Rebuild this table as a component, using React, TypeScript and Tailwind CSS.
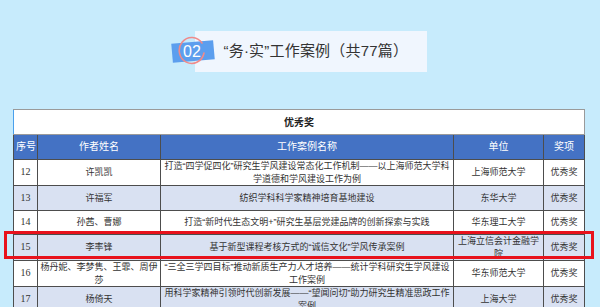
import React from "react";

type Row = {
  no: string;
  author: string;
  title: string;
  unit: string;
  award: string;
  shaded: boolean;
};

const rows: Row[] = [
  {
    no: "12",
    author: "许凯凯",
    title: "打造“四学促四化”研究生学风建设常态化工作机制——以上海师范大学科学道德和学风建设工作为例",
    unit: "上海师范大学",
    award: "优秀奖",
    shaded: false,
  },
  { no: "13", author: "许福军", title: "纺织学科科学家精神培育基地建设", unit: "东华大学", award: "优秀奖", shaded: true },
  {
    no: "14",
    author: "孙茜、曹娜",
    title: "打造“新时代生态文明+”研究生基层党建品牌的创新探索与实践",
    unit: "华东理工大学",
    award: "优秀奖",
    shaded: false,
  },
  {
    no: "15",
    author: "李率锋",
    title: "基于新型课程考核方式的“诚信文化”学风传承案例",
    unit: "上海立信会计金融学院",
    award: "优秀奖",
    shaded: true,
  },
  {
    no: "16",
    author: "杨丹妮、李梦隽、王霏、周伊莎",
    title: "“三全三学四目标”推动新质生产力人才培养——统计学科研究生学风建设工作案例",
    unit: "华东师范大学",
    award: "优秀奖",
    shaded: false,
  },
  {
    no: "17",
    author: "杨倚天",
    title: "用科学家精神引领时代创新发展——“望闻问切”助力研究生精准思政工作案例",
    unit: "上海大学",
    award: "优秀奖",
    shaded: true,
  },
];

const cell = "border border-[#4d4d4d] px-[2px] text-center align-middle leading-[12.5px]";

const App: React.FC = () => {
  return (
    <div
      className="w-[600px] h-[307px] overflow-hidden bg-[#c7ebfc] flex flex-col items-center"
      style={{ fontFamily: '"Liberation Sans", "Noto Sans CJK SC", sans-serif' }}
    >
      {/* 标题 */}
      <div className="mt-[31px] flex items-center pr-[2px]">
        <div className="relative z-10 w-[44px] h-[41px] flex items-center justify-center">
          <div className="absolute left-0 top-[11px] w-[42px] h-[19px] bg-[#5c9eee] -rotate-[5deg]" />
          <svg className="absolute left-[6px] top-[5px]" width="28" height="29" viewBox="0 0 28 29">
            <path
              d="M24 7 A12.5 13 0 1 0 26 17"
              fill="none"
              stroke="#f08a8a"
              strokeWidth="1.6"
              strokeLinecap="round"
            />
          </svg>
          <span className="relative text-white text-[16px] leading-none mr-[3px]">02</span>
        </div>
        <div className="-ml-[21px] w-[232px] h-[41px] bg-[#f0f6fe] flex items-center pl-[29px]">
          <span className="text-[15px] text-[#333] tracking-[0.2px]">“务·实”工作案例（共77篇）</span>
        </div>
      </div>

      {/* 表格 */}
      <div className="relative mt-[37px] w-[600px] pl-[13px]">
        <table className="table-fixed border-collapse w-[571px] text-[9px] text-[#333] bg-white border-l border-l-[#4aa0ec]">
          <colgroup>
            <col className="w-[24px]" />
            <col className="w-[123px]" />
            <col className="w-[293px]" />
            <col className="w-[90px]" />
            <col className="w-[41px]" />
          </colgroup>
          <tbody>
            <tr className="h-[25px]">
              <td colSpan={5} className="border border-[#9a9a9a] border-l-[#4aa0ec] text-center font-bold text-[10px] text-[#222]">
                优秀奖
              </td>
            </tr>
            <tr className="h-[25px] bg-[#4472c4] text-white text-[10px]">
              <td className={`${cell} px-0 whitespace-nowrap`}>序号</td>
              <td className={cell}>作者姓名</td>
              <td className={cell}>工作案例名称</td>
              <td className={cell}>单位</td>
              <td className={cell}>奖项</td>
            </tr>
            {rows.map((r) => (
              <tr key={r.no} className={`h-[24.5px] ${r.shaded ? "bg-[#d9e1f2]" : "bg-white"}`}>
                <td className={`${cell} px-0 text-[10px]`} style={{ fontFamily: '"Liberation Serif", serif' }}>
                  {r.no}
                </td>
                <td className={`${cell} px-[1px]`}>{r.author}</td>
                <td className={cell}>{r.title}</td>
                <td className={cell}>{r.unit}</td>
                <td className={cell}>{r.award}</td>
              </tr>
            ))}
          </tbody>
        </table>
        {/* 红框标注 */}
        <div className="absolute left-[4px] top-[122px] w-[590px] h-[28px] border-[3px] border-[#e8121c] pointer-events-none" />
      </div>
    </div>
  );
};

export default App;
